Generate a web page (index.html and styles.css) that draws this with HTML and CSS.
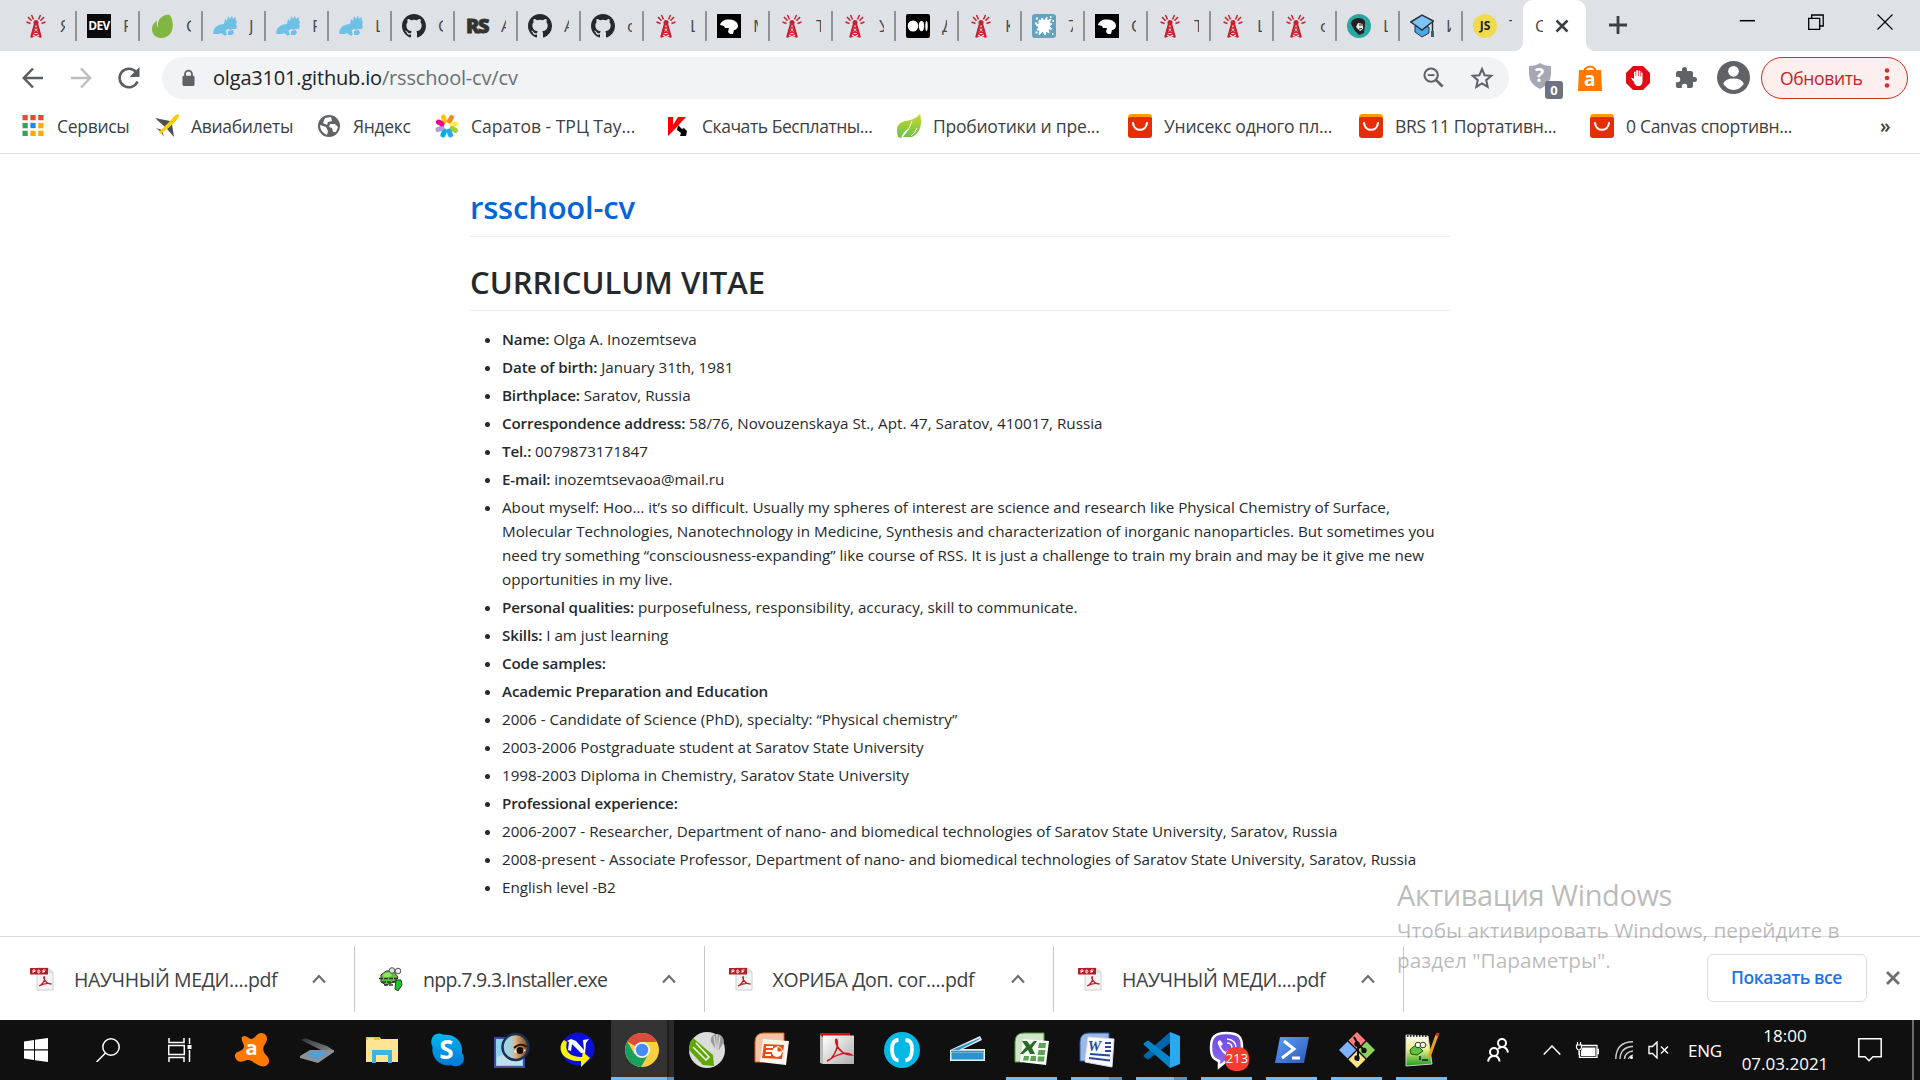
FILE: index.html
```html
<!DOCTYPE html>
<html lang="ru">
<head>
<meta charset="utf-8">
<title>CURRICULUM VITAE | rsschool-cv</title>
<link rel="stylesheet" href="styles.css">
</head>
<body>
<svg class="defs" width="0" height="0">
  <defs>
    <linearGradient id="gSkype" x1="0" y1="0" x2="0" y2="1"><stop offset="0" stop-color="#00b7f0"/><stop offset="1" stop-color="#0078d4"/></linearGradient>
    <linearGradient id="gSilver" x1="0" y1="0" x2="1" y2="1"><stop offset="0" stop-color="#fff"/><stop offset="1" stop-color="#b0b0b0"/></linearGradient>
    <linearGradient id="gPs" x1="0" y1="0" x2="1" y2="1"><stop offset="0" stop-color="#5b9bff"/><stop offset="1" stop-color="#2d5bb0"/></linearGradient>
    <linearGradient id="gLeaf" x1="0" y1="0" x2="0" y2="1"><stop offset="0" stop-color="#c8d82c"/><stop offset="1" stop-color="#6cc04a"/></linearGradient>
    <linearGradient id="gNpp" x1="0" y1="0" x2="0" y2="1"><stop offset="0" stop-color="#fff"/><stop offset=".45" stop-color="#eef58a"/><stop offset="1" stop-color="#1f9a1f"/></linearGradient>
    <linearGradient id="gViber" x1="0" y1="0" x2="0" y2="1"><stop offset="0" stop-color="#6a4be0"/><stop offset="1" stop-color="#9168f5"/></linearGradient>
    <linearGradient id="gLens" x1="0" y1="0" x2="1" y2="0"><stop offset="0" stop-color="#9cd4ec"/><stop offset=".35" stop-color="#a8cfd8"/><stop offset=".5" stop-color="#e0b080"/><stop offset="1" stop-color="#6d3d1c"/></linearGradient>
    <linearGradient id="gScan" x1="0" y1="0" x2="1" y2="1"><stop offset="0" stop-color="#303336"/><stop offset="1" stop-color="#8a8f93"/></linearGradient>
  </defs>
  <symbol id="tower" viewBox="0 0 24 24"><g fill="none" stroke="#c8202f"><path d="M11.2 9 7.2 23.500M12.800 9l4 14.500" stroke-width="2.200"/><path d="M10 13l5 3-6.500 3.500 8 3.500M14 13l-5 3 6.500 3.500-8 3.500" stroke-width="1.300"/><path d="M9.500 5.500 7.500 1M6.500 9.500 2.500 8M7.500 6.800 4 3M14.500 5.500l2-4.500M17.500 9.500l4-1.500M16.500 6.800 20 3" stroke-width="1.500"/></g><circle cx="12" cy="8.500" r="2.500" fill="#c8202f"/></symbol>
  <symbol id="envato" viewBox="0 0 24 24"><path d="M18.500.4C14 .4 8.500 4 8 9.500c-.2 2 .4 3.800.2 4.300C7 12.500 6.500 10 6.600 6.800 2.500 10 1.500 14 2.300 17.500 3.200 21.500 7 24 11.500 24c6 0 10.700-4.500 11.200-11C23 7.500 21.500 1 18.500.4z" fill="#82b541"/></symbol>
  <symbol id="rhino" viewBox="0 0 24 24"><path d="M0 21q0-8 6-10 3-1 5-1l1-5 2 2 1-5 2 3 2-3.500 1 3.500 2.500-2 .5 4h1l-1 4 1 1-1 3-4 0-1 1-3-1-3 2 2 3-2 2-4-3-2 1H0zM15 17l5-1 1 3-2 2-4 0z" fill="#6fc0e6"/><path d="M8 16l5 1-1 3z" fill="#6fc0e6"/></symbol>
  <symbol id="github" viewBox="0 0 16 16"><path fill="#24292e" d="M8 0C3.580 0 0 3.580 0 8c0 3.540 2.290 6.530 5.470 7.590.4.070.55-.17.55-.38 0-.19-.01-.82-.01-1.490-2.010.37-2.530-.49-2.690-.94-.09-.23-.48-.94-.82-1.130-.28-.15-.68-.52-.01-.53.63-.01 1.080.58 1.230.82.72 1.210 1.870.87 2.330.66.070-.52.28-.87.51-1.070-1.780-.2-3.640-.89-3.640-3.950 0-.87.31-1.590.82-2.150-.08-.2-.36-1.020.08-2.120 0 0 .67-.21 2.200.82a7.600 7.600 0 0 1 4 0c1.530-1.040 2.200-.82 2.200-.82.44 1.100.16 1.920.08 2.120.51.56.82 1.270.82 2.150 0 3.070-1.870 3.750-3.650 3.950.29.25.54.73.54 1.480 0 1.070-.01 1.930-.01 2.200 0 .21.15.46.55.38A8 8 0 0 0 16 8c0-4.420-3.580-8-8-8z"/></symbol>
  <symbol id="lion" viewBox="0 0 24 24"><path d="M0 0h24v24H0z"/><path d="M3 11c1-4 5-6 10-5.500 5 .5 8 3 8 6.500 0 2-2 4-4 4l-1 4h-3l-2-2 1-4H8l-1-2z" fill="#fff"/></symbol>
  <symbol id="medium" viewBox="0 0 24 24"><rect width="24" height="24" rx="2"/><ellipse cx="7" cy="12" rx="5.300" ry="5.500" fill="#fff"/><ellipse cx="15.500" cy="12" rx="2.700" ry="5.300" fill="#fff"/><ellipse cx="20.500" cy="12" rx="1.200" ry="5" fill="#fff"/></symbol>
  <symbol id="splat" viewBox="0 0 24 24"><rect width="24" height="24" rx="3" fill="#64a2bf"/><path d="M7 6l2 1 1-3 2 3 3-4 0 4 4-2-2 4 3 1-3 2 3 3-4 0 1 4-3-2-1 4-2-4-4 4 1-5-3 0 2-3-3-2 3-1z" fill="#fff" stroke="#fff"/><path d="M4 4.500h2M3 9.500h2M3.500 18.500h2M20 20h1.500M20.500 7H22M18 3h1.500" stroke="#fff" stroke-width="1.800"/></symbol>
  <symbol id="man" viewBox="0 0 24 24"><circle cx="12" cy="12" r="12" fill="#2ba6a0"/><path d="M4 10c0-4 4-6 8-6s7 3 6 6l-1 9-5 2-4-4z" fill="#222"/><path d="M11 9l5 1v5l-3 2-4-4z" fill="#e8e8e8"/><path d="M12 11h4M12 15l3-.5" stroke="#222"/></symbol>
  <symbol id="hat" viewBox="0 0 24 24"><path d="M5 12v6l7 5 7-4v-6z" fill="#4aa8e8" stroke="#26323c"/><path d="M.8 8 12 1l11.500 6L12 16z" fill="#7cc4f8" stroke="#26323c" stroke-width="1.500"/><path d="M22.500 8v13" stroke="#26323c" stroke-width="1.500"/><path d="M21 17h3v6h-3z" fill="#35617f"/></symbol>
  <symbol id="cross" viewBox="0 0 24 24"><path d="M6 6l12 12M18 6 6 18" stroke="currentColor" stroke-width="2.800"/></symbol>
  <symbol id="ali" viewBox="0 0 24 24"><path d="M0 3.500Q0 0 3.500 0h17Q24 0 24 3.500V10H0z" fill="#ff9a00"/><path d="M0 5q0-2 3-2h18q3 0 3 2v16q0 3-3 3H3q-3 0-3-3z" fill="#e62e04"/><path d="M5 9c1 9 13 9 14 0" stroke="#fff" stroke-width="2.200" fill="none" stroke-linecap="round"/></symbol>
  <symbol id="up" viewBox="0 0 16 16"><path d="M2 11.500 8 5l6 6.500" fill="none" stroke="currentColor" stroke-width="2.200"/></symbol>
  <symbol id="pdf" viewBox="0 0 24 24"><path d="M7 1h11l5 4v18H7z" fill="#f4f4f4" stroke="#d0d0d0"/><path d="M18 1v5h5" fill="#ddd"/><path d="M0 1h18v6.500H0z" fill="#b4202a"/><path d="M3 6V3h2v1.500H3M8 3v3q2 0 2-1.500T8 3M13 6V3h2.500M13 4.500h2" fill="none" stroke="#fff" stroke-width=".9"/><path d="M9 19c3-1 6-5 5.500-8.500-.3-1.500-1-.5-.5 1 1.300 4 4 5.500 7.500 5.500-4-1.500-8.500-.3-12.500 2z" fill="none" stroke="#c2202b" stroke-width="1.300"/></symbol>
</svg>

<header class="tabs">
  <div class="tab"><svg><use href="#tower"/></svg><span>Я</span></div>
  <div class="tab"><i class="fav dev">DEV</i><span>F</span></div>
  <div class="tab"><svg><use href="#envato"/></svg><span>C</span></div>
  <div class="tab"><svg><use href="#rhino"/></svg><span>J</span></div>
  <div class="tab"><svg><use href="#rhino"/></svg><span>F</span></div>
  <div class="tab"><svg><use href="#rhino"/></svg><span>L</span></div>
  <div class="tab"><svg><use href="#github"/></svg><span>C</span></div>
  <div class="tab"><i class="fav rs">RS</i><span>A</span></div>
  <div class="tab"><svg><use href="#github"/></svg><span>A</span></div>
  <div class="tab"><svg><use href="#github"/></svg><span>c</span></div>
  <div class="tab"><svg><use href="#tower"/></svg><span>L</span></div>
  <div class="tab"><svg><use href="#lion"/></svg><span>M</span></div>
  <div class="tab"><svg><use href="#tower"/></svg><span>T</span></div>
  <div class="tab"><svg><use href="#tower"/></svg><span>У</span></div>
  <div class="tab"><svg><use href="#medium"/></svg><span>Д</span></div>
  <div class="tab"><svg><use href="#tower"/></svg><span>К</span></div>
  <div class="tab"><svg><use href="#splat"/></svg><span>7</span></div>
  <div class="tab"><svg><use href="#lion"/></svg><span>C</span></div>
  <div class="tab"><svg><use href="#tower"/></svg><span>T</span></div>
  <div class="tab"><svg><use href="#tower"/></svg><span>L</span></div>
  <div class="tab"><svg><use href="#tower"/></svg><span>c</span></div>
  <div class="tab"><svg><use href="#man"/></svg><span>L</span></div>
  <div class="tab"><svg><use href="#hat"/></svg><span>И</span></div>
  <div class="tab last"><i class="fav js">JS</i><span>T</span></div>
  <div class="tab active"><span>C</span><svg><use href="#cross"/></svg></div>
  <svg class="plus" viewBox="0 0 18 18"><path d="M9 0v18M0 9h18" stroke="#3c4043" stroke-width="2.800"/></svg>
  <div class="winbtns">
    <svg viewBox="0 0 16 16"><path d="M.8 6.700h15.200" stroke="#000" stroke-width="1.500"/></svg>
    <svg viewBox="0 0 16 16"><path d="M.7 4.300h11v11H.7zM3.700 4V1h11.500v11H12" fill="none" stroke="#000" stroke-width="1.300"/></svg>
    <svg viewBox="0 0 16 16"><path d="M.5.5l15 15M15.500.5l-15 15" stroke="#000" stroke-width="1.200"/></svg>
  </div>
</header>

<nav class="toolbar">
  <div class="navbtns">
    <svg viewBox="0 0 24 24"><path d="M22 12H3M12 2.500 2.800 12l9.200 9.500" fill="none" stroke="#5a5d61" stroke-width="2.500"/></svg>
    <svg viewBox="0 0 24 24"><path d="M2 12h19M12 2.500l9.200 9.500-9.200 9.500" fill="none" stroke="#bcbec0" stroke-width="2.500"/></svg>
    <svg viewBox="0 0 24 24"><path d="M20.500 15.500A9.300 9.300 0 1 1 19 6" fill="none" stroke="#5a5d61" stroke-width="2.500"/><path d="M22.500 1v10h-10z" fill="#5a5d61"/></svg>
  </div>
  <div class="omnibox">
    <svg class="lock" viewBox="0 0 14 18"><path d="M3.300 8V4.800a3.700 3.700 0 0 1 7.400 0V8" fill="none" stroke="#5f6368" stroke-width="2"/><rect x=".5" y="6.500" width="13" height="11" rx="1.500" fill="#5f6368"/></svg>
    <span class="url"><b>olga3101.github.io</b>/rsschool-cv/cv</span>
    <svg class="mag" viewBox="0 0 22 22"><circle cx="8.500" cy="8.500" r="7" fill="none" stroke="#5f6368" stroke-width="2.200"/><path d="M13.500 13.500l7 7" stroke="#5f6368" stroke-width="2.800"/><path d="M5 8.500h7" stroke="#5f6368" stroke-width="2"/></svg>
    <svg class="star" viewBox="0 0 24 24"><path d="M12 3l2.600 6.200 6.700.6-5.100 4.400 1.500 6.600-5.700-3.500-5.700 3.500 1.500-6.600-5.100-4.400 6.700-.6z" fill="none" stroke="#5f6368" stroke-width="2"/></svg>
  </div>
  <div class="exts">
    <div class="shield"><svg viewBox="0 0 24 26"><path d="M0 3Q7 3 11 0q4 3 11 3v8q0 10-11 15Q0 21 0 11z" fill="#a4a8b5"/></svg><em>?</em><b>0</b></div>
    <div class="bag"><svg viewBox="0 0 24 26"><path d="M7 7V4q5-5 10 0v3" fill="none" stroke="#ff7800" stroke-width="2"/><path d="M1 5h22l1 21H0z" fill="#ff7800"/></svg><em>a</em></div>
    <svg class="abp" viewBox="0 0 24 24"><path d="M7 0h10l7 7v10l-7 7H7l-7-7V7z" fill="#e30b13"/><path d="M7 15l-2-3q1-1 3 1V6q1-1 1.600 0v4l.6 0V4.500q1-1 1.800 0V10h.6V5q1-1 1.800 0v5.500h.6V7q1-1 1.500 0v8q0 4-3 5h-3q-2-1-3-5z" fill="#fff"/></svg>
    <svg class="puz" viewBox="0 0 24 24"><path d="M20.500 11H19V7c0-1.100-.9-2-2-2h-4V3.500a2.500 2.500 0 0 0-5 0V5H4a2 2 0 0 0-2 2v3.800h1.500a2.700 2.700 0 0 1 0 5.400H2V20c0 1.100.9 2 2 2h3.800v-1.500a2.700 2.700 0 0 1 5.400 0V22H17a2 2 0 0 0 2-2v-4h1.500a2.500 2.500 0 0 0 0-5z" fill="#5f6368"/></svg>
    <svg class="avatar" viewBox="0 0 32 32"><circle cx="16" cy="16" r="16" fill="#5f6368"/><circle cx="16" cy="10" r="5.200" fill="#fff"/><path d="M6 22q2-5 10-5t10 5q-4 6-10 6T6 22z" fill="#fff"/></svg>
  </div>
  <div class="update"><span>Обновить</span><svg viewBox="0 0 6 20"><circle cx="3" cy="2.500" r="2.300"/><circle cx="3" cy="10" r="2.300"/><circle cx="3" cy="17.500" r="2.300"/></svg></div>
</nav>

<nav class="bookmarks">
  <div class="bm b1"><svg viewBox="0 0 20 20"><path d="M0 0h5v5H0zM7.500 0h5v5h-5zM15 0h5v5h-5z" fill="#f04438"/><path d="M0 7.500h5v5H0zM0 15h5v5H0z" fill="#34a05a"/><path d="M7.500 7.500h5v5h-5z" fill="#1e88f0"/><path d="M15 7.500h5v5h-5zM7.500 15h5v5h-5zM15 15h5v5h-5z" fill="#f9ab00"/></svg><span>Сервисы</span></div>
  <div class="bm b2"><svg viewBox="0 0 24 24"><path d="M0 4l15 3 1 2-5 4-1 0zM19 23l-2-13-5 5z" fill="#4b5055"/><path d="M1 14l6 2 2 7-3-5z" fill="#4b5055"/><path d="M24 0c-3 0-5 2-8 6L4 18l2 2 13-11c4-4 5-6 5-9z" fill="#fc0"/></svg><span>Авиабилеты</span></div>
  <div class="bm b3"><svg viewBox="0 0 24 24"><circle cx="12" cy="12" r="11" fill="#5f6368"/><path d="M3 11l6 2 2 4-1 4Q3 18 3 11zM8 4l6-1 1 4-4 1-1 3-4-2zM13 10l5 0 3 3-2 5-3 0-1-4-3-1z" fill="#fff"/></svg><span>Яндекс</span></div>
  <div class="bm b4"><svg viewBox="0 0 24 24"><g stroke-width="5" stroke-linecap="round"><path d="M9.500 7 8.500 3" stroke="#ffc400"/><path d="M14.500 7l2-3.500" stroke="#f68b1f"/><path d="M17 11l4-1" stroke="#ffe95c"/><path d="M17 14.500l3.500 2" stroke="#a6ce39"/><path d="M14 17l1.500 4" stroke="#29abe2"/><path d="M9.500 17 8 21" stroke="#00aeef"/><path d="M7 14l-4 1.500" stroke="#b19cd9"/><path d="M7 10 3.500 8" stroke="#ec008c"/></g></svg><span>Саратов - ТРЦ Тау...</span></div>
  <div class="bm b5"><svg viewBox="0 0 24 24"><path d="M2 3h5v8l5-8h8L9 15l-7 7z" fill="#f00"/><path d="M12 11l4 4 2-1 3 3-1 5-6 0 1-3-4-3z"/></svg><span>Скачать Бесплатны...</span></div>
  <div class="bm b6"><svg viewBox="0 0 24 24"><path d="M1 23C-2 12 2 9 8 7q10-1 15-7c3 12-1 20-8 23H6l5-8q-4 2-7 9z" fill="url(#gLeaf)"/><path d="M6 22q7-7 9-15M14 22q4-3 6-8" stroke="#fff" stroke-width="1" fill="none"/></svg><span>Пробиотики и пре...</span></div>
  <div class="bm b7"><svg><use href="#ali"/></svg><span>Унисекс одного пл...</span></div>
  <div class="bm b8"><svg><use href="#ali"/></svg><span>BRS 11 Портативн...</span></div>
  <div class="bm b9"><svg><use href="#ali"/></svg><span>0 Canvas спортивн...</span></div>
  <span class="more">»</span>
</nav>

<main class="page">
  <article class="markdown">
    <h1><a>rsschool-cv</a></h1>
    <h1 class="cv">CURRICULUM VITAE</h1>
    <ul>
      <li><strong>Name:</strong> Olga A. Inozemtseva</li>
      <li><strong>Date of birth:</strong> January 31th, 1981</li>
      <li><strong>Birthplace:</strong> Saratov, Russia</li>
      <li><strong>Correspondence address:</strong> 58/76, Novouzenskaya St., Apt. 47, Saratov, 410017, Russia</li>
      <li><strong>Tel.:</strong> 0079873171847</li>
      <li><strong>E-mail:</strong> inozemtsevaoa@mail.ru</li>
      <li>About myself: Hoo… it’s so difficult. Usually my spheres of interest are science and research like Physical Chemistry of Surface,<br>Molecular Technologies, Nanotechnology in Medicine, Synthesis and characterization of inorganic nanoparticles. But sometimes you<br>need try something “consciousness-expanding” like course of RSS. It is just a challenge to train my brain and may be it give me new<br>opportunities in my live.</li>
      <li><strong>Personal qualities:</strong> purposefulness, responsibility, accuracy, skill to communicate.</li>
      <li><strong>Skills:</strong> I am just learning</li>
      <li><strong>Code samples:</strong></li>
      <li><strong>Academic Preparation and Education</strong></li>
      <li>2006 - Candidate of Science (PhD), specialty: “Physical chemistry”</li>
      <li>2003-2006 Postgraduate student at Saratov State University</li>
      <li>1998-2003 Diploma in Chemistry, Saratov State University</li>
      <li><strong>Professional experience:</strong></li>
      <li>2006-2007 - Researcher, Department of nano- and biomedical technologies of Saratov State University, Saratov, Russia</li>
      <li>2008-present - Associate Professor, Department of nano- and biomedical technologies of Saratov State University, Saratov, Russia</li>
      <li>English level -B2</li>
    </ul>
  </article>
</main>

<section class="downloads">
  <div class="dl"><svg class="ico"><use href="#pdf"/></svg><span>НАУЧНЫЙ МЕДИ....pdf</span><svg class="chev"><use href="#up"/></svg></div>
  <div class="dl exe"><svg class="ico" viewBox="0 0 24 24"><path d="M2 8l5-4 7 0 5 6-4 5-8 3-5-3z" fill="#5fc23f" stroke="#333"/><path d="M4 7l7-2 2 4-8 2z" fill="#8de85a"/><path d="M0 11.500h19M3 15h14M5 18h9" stroke="#333" stroke-width="1.500" stroke-dasharray="4 1"/><circle cx="13" cy="3.500" r="2.800" fill="#ddd" stroke="#555"/><circle cx="19" cy="4" r="2.800" fill="#eee" stroke="#555"/><path d="M17 13l5 0 1 5-4 6-3-2z" fill="#21c42d" stroke="#333"/></svg><span>npp.7.9.3.Installer.exe</span><svg class="chev"><use href="#up"/></svg></div>
  <div class="dl"><svg class="ico"><use href="#pdf"/></svg><span>ХОРИБА Доп. сог....pdf</span><svg class="chev"><use href="#up"/></svg></div>
  <div class="dl"><svg class="ico"><use href="#pdf"/></svg><span>НАУЧНЫЙ МЕДИ....pdf</span><svg class="chev"><use href="#up"/></svg></div>
  <div class="showall">Показать все</div>
  <svg class="close"><use href="#cross"/></svg>
  <div class="watermark"><p class="big">Активация Windows</p><p>Чтобы активировать Windows, перейдите в</p><p>раздел "Параметры".</p></div>
</section>

<footer class="taskbar">
  <div class="sys s1"><svg viewBox="0 0 24 24"><path d="M0 3.400 10 2v9.300H0zM11 1.800 24 0v11.300H11zM0 12.500h10V22L0 20.600zM11 12.500h13V24l-13-1.800z" fill="#fff"/></svg></div>
  <div class="sys s2"><svg viewBox="0 0 24 24"><circle cx="15" cy="9" r="8.200" fill="none" stroke="#fff" stroke-width="1.500"/><path d="M9.500 15 .5 24" stroke="#fff" stroke-width="1.500"/></svg></div>
  <div class="sys s3"><svg viewBox="0 0 24 24"><path d="M1 0v4.500h15V0M1 24v-4.500h15V24M.7 7.500h15.600v9H.7zM21.500 0v6M21.500 12v12" fill="none" stroke="#fff" stroke-width="1.500"/><path d="M19.500 7h4v4h-4z" fill="#fff"/></svg></div>
  <div class="app"><svg viewBox="0 0 36 36"><path d="M8 5c3-3 6 1 9 2 4 0 6-7 11-6 6 1 6 7 3 11-3 5-2 8 2 12 5 6 0 12-6 10-6-1-9-7-14-6-5 2-8 3-11-1s0-7 4-8c4-2 5-4 3-8q-2-4-1-6z" fill="#ff7800"/></svg><em class="av">a</em></div>
  <div class="app"><svg viewBox="0 0 36 36"><path d="M2 8q1-2 5-1.500L28 14l6 4-6 3z" fill="url(#gScan)"/><path d="M1 24l10-6 24 0v2L19 31 1 26z" fill="#8a9095"/><path d="M7 24l7-4.500 15 .5-9 6.500z" fill="#4fa2dc"/></svg></div>
  <div class="app"><svg viewBox="0 0 36 36"><path d="M2 6q0-1 1-1h12q1 0 2 2h17v23H2z" fill="#ffe491"/><path d="M2 6q0-1 1-1h12l1 3H2z" fill="#f5c32f"/><path d="M4 7h6" stroke="#fff"/><path d="M8 31V18h20v13h-4v-8H12v8z" fill="#3ab5e6"/></svg></div>
  <div class="app"><svg viewBox="0 0 36 36"><path d="M10 1.500c2 0 3 1 5 1.300a16 16 0 0 1 18 18c2 3 3 8 0 11s-7 3-11 1.500A16 16 0 0 1 3.500 15C1 10 2 2 10 1.500z" fill="url(#gSkype)"/></svg><em class="sk">S</em></div>
  <div class="app"><svg viewBox="0 0 36 36"><path d="M1 6h29v29H1z" fill="#8fd0ec" stroke="#4048a8" stroke-width="2"/><path d="M3 25q8-5 12 0l13 0v8H3z" fill="#bfe0ea"/><circle cx="21.500" cy="15" r="13" fill="url(#gLens)" stroke="#1b2f52" stroke-width="2.500"/><path d="M20 20q4-6 12-2-4 5-12 2z" fill="#fff"/><circle cx="26" cy="18.500" r="3.500" fill="#1c0d06"/><path d="M20 16q6-6 13-1" stroke="#2c1508" stroke-width="2" fill="none"/></svg></div>
  <div class="app"><svg viewBox="0 0 36 36"><circle cx="19" cy="17" r="16.500" fill="#0a10d8"/><path d="M8 9l4-2 5 2 8 9-1-10 6-1-3 4-1 11-4-1-9-9-1 7-3-1 1-8z" fill="#fff"/><path d="M5 8C-3 16 3 30 22 29v6l9-9-7-6-1 5C12 25 5 20 8 10z" fill="#fff200"/></svg></div>
  <div class="app chrome"><svg viewBox="0 0 36 36"><circle cx="18" cy="18" r="17" fill="#ffcd40"/><path d="M18 18 3.300 9.500A17 17 0 0 1 33 10H18z" fill="#db4c3f"/><path d="M3.300 9.500A17 17 0 0 0 17 35l7.500-13H10.500z" fill="#17a05e"/><circle cx="18" cy="18" r="8" fill="#f1f1f1"/><circle cx="18" cy="18" r="6.200" fill="#4a8af4"/></svg></div>
  <div class="app"><svg viewBox="0 0 36 36"><circle cx="18" cy="18" r="18" fill="#dcdcdc"/><path d="M1 10 4 6l20 17 1 11-11-1L0 18z" fill="#5fa800"/><path d="M4 15l13 13 3-3L7 11" fill="none" stroke="#fff" stroke-width="1.500"/><path d="M28 2c-5 0-7 4-6 8l5 8h3l5-8c0-4-3-8-7-8z" fill="#999"/><path d="M28 2v16M25 4l2 14M31 4l-2 14" stroke="#e4e4e4"/></svg></div>
  <div class="app"><svg viewBox="0 0 36 36"><path d="M1 30V10Q1 1 10 1h20v10L10 12 8 30z" fill="#f6c3a6" stroke="#e35a1c"/><path d="M9 7l26 2-3 24L6 30z" fill="#fff5ef"/><path d="M10 12l20 1-2 14-20-1z" fill="#ea4c12"/><path d="M12 15h7M12 19h6M11 23h6" stroke="#fff" stroke-width="2"/><circle cx="23" cy="20" r="5" fill="#fff"/><path d="M23 20v-5.500a5.500 5.500 0 0 1 5.500 5.500z" fill="#ea4c12" stroke="#fff"/></svg></div>
  <div class="app"><svg viewBox="0 0 36 36"><path d="M1 1h30v3H1z" fill="#e30613"/><path d="M1 3l3 2v27l-3-1z" fill="#bbb"/><path d="M4 3.500h31V32H4z" fill="url(#gSilver)"/><path d="M8 29c6-2 12-13 10-21-1-2-2 0-1 3 2 7 8 12 16 12-6-4-17 0-23 5z" fill="none" stroke="#d3151d" stroke-width="1.500"/></svg></div>
  <div class="app"><svg viewBox="0 0 36 36"><circle cx="18" cy="18" r="18" fill="#00b9e4"/><path d="M14.500 8Q7.500 8 8 18t6.500 10.500M21.500 8Q28.500 8 28 18t-6.500 10.500" fill="none" stroke="#fff" stroke-width="3.800"/></svg></div>
  <div class="app"><svg viewBox="0 0 36 36"><path d="M1 18 31 4l2 4-19 9h22v12H1z" fill="#e8eef2"/><path d="M3 18 31 6v1L10 18zM2.500 20.500h32v7h-32z" fill="#2795cf"/><path d="M2 19.500h33" stroke="#2795cf" stroke-width="1.500"/></svg></div>
  <div class="app run"><svg viewBox="0 0 36 36"><path d="M1 30V10Q1 1 10 1h20v10L10 12 8 30z" fill="#cfe5c8" stroke="#4c9a34"/><path d="M9 7l26 2-3 24L6 30z" fill="#f7fbf5"/><path d="M25 11h7l-.6 5H24zM24.500 18h6.800l-.6 5h-7zM10 24h5l-.5 4.500H9zM17 24h5v5h-6zM24 24.500h6.500l-.5 5h-6.500z" fill="#5aa552"/><path d="M8 9h5l3 4 4-4h3l-5 7 3 6h-5l-2-4-5 4H6l6-7z" fill="#286b25"/></svg></div>
  <div class="app run two"><svg viewBox="0 0 36 36"><path d="M1 29V10Q1 1 10 1h20v10L10 12 8 29z" fill="#9db9e3" stroke="#2f5ba8"/><path d="M9 5l26 2-2 28L6 30z" fill="#fafcff" stroke="#d5dced"/><path d="M26 11h6M26 15h6M26 19h6M11 22l20 1.500M10 26l21 2.500" stroke="#27489c" stroke-width="2"/></svg><em class="wd">W</em></div>
  <div class="app run two"><svg viewBox="0 0 36 36"><path d="M26 0v11L5 27q-1 1-2 0l-3-2q-1-1 0-2z" fill="#0065a9"/><path d="M26 36V25L5 9Q4 8 3 9l-3 2q-1 1 0 2z" fill="#0a82c8"/><path d="M26 0l10 4v28l-10 4z" fill="#2aa8f0"/></svg></div>
  <div class="app run viber"><svg viewBox="0 0 36 36"><path d="M17 1C5 1 2 6 2 15s2 12 8 14v6l6-5c12 0 17-4 17-15S29 1 17 1z" fill="url(#gViber)" stroke="#fff" stroke-width="2.500"/><path d="M11 8q-3 1-2 4 3 9 11 13 3 0 4-3l-5-4-2 2q-4-2-5-6l2-2z" fill="#fff"/><path d="M18 7q9 1 9 9M18 11q5 0 5 5" fill="none" stroke="#fff" stroke-width="1.500"/></svg><b class="badge">213</b></div>
  <div class="app run"><svg viewBox="0 0 36 36"><path d="M6 5h29l-5 26H1z" fill="url(#gPs)"/><path d="M10 9l10 8L8 26M18 26h8" fill="none" stroke="#fff" stroke-width="3"/></svg></div>
  <div class="app run"><svg viewBox="0 0 36 36"><path d="M18 0l8.500 8.500L18 17 9.500 8.500z" fill="#ff7d7d"/><path d="M27.500 9.500 36 18l-8.500 8.500L19 18z" fill="#8ed160"/><path d="M8.500 9.500 17 18l-8.500 8.500L0 18z" fill="#7fb2ff"/><path d="M18 19l8.500 8.500L18 36l-8.500-8.500z" fill="#ffe685"/><path d="M15 5l4 7v17M18 11l8 8" stroke="#101010" stroke-width="2" fill="none"/><circle cx="18" cy="12" r="2.700" fill="#101010"/><circle cx="25" cy="18.500" r="2.700" fill="#101010"/><circle cx="18" cy="26" r="2.700" fill="#101010"/></svg></div>
  <div class="app run"><svg viewBox="0 0 36 36"><path d="M2 3l22 1 4 28-26 2z" fill="url(#gNpp)" stroke="#ccc"/><path d="M3 4h20" stroke="#333" stroke-width="2" stroke-dasharray="1.500 1.500"/><path d="M6 18q4-6 9-3l4 4-6 4-6-1z" fill="#5cc43c" stroke="#264f1a"/><circle cx="14" cy="13" r="2.800" fill="#fff" stroke="#333"/><circle cx="19" cy="13" r="2.800" fill="#fff" stroke="#333"/><path d="M16 28v-4M18 28h6" stroke="#123" stroke-width="1.500"/><path d="M33 3 25 25" stroke="#f0a020" stroke-width="3"/><path d="M34 1l-1 3" stroke="#c33" stroke-width="3"/></svg></div>
  <div class="tray">
    <svg class="people" viewBox="0 0 22 24"><g fill="none" stroke="#fff" stroke-width="2"><circle cx="15" cy="5" r="4"/><circle cx="7" cy="14" r="4"/><path d="M1 23.500q1-5.500 6-5.500t5.500 5.500M11 11q2-2 4-2 5 0 6 5.500"/></g></svg>
    <svg class="tup" viewBox="0 0 18 10"><path d="M.7 9.500 9 1l8.300 8.500" fill="none" stroke="#fff" stroke-width="1.500"/></svg>
    <svg class="bat" viewBox="0 0 24 16"><path d="M6 3.500h16v12H4.500V9M22.500 7.500h1v4h-1" fill="none" stroke="#fff" stroke-width="1.300"/><path d="M7.500 5.500h13v8.500H6V9z" fill="#fff"/><path d="M1.500 3h5v3q-2.500 4-5 0zM2.500 3V0M5.500 3V0M4 8v5" fill="none" stroke="#fff" stroke-width="1.200"/></svg>
    <svg class="wifi" viewBox="0 0 18 18"><g fill="none" stroke="#ccc" stroke-width="1.400"><path d="M.8 18Q1 1 18 .8M5 18Q5.500 6 18 5.500M9.500 18q.5-7 8.500-8"/></g><path d="M13.500 18q0-3 4.500-4" fill="none" stroke="#fff" stroke-width="1"/><circle cx="16.500" cy="16.500" r="1.500" fill="#fff"/></svg>
    <svg class="vol" viewBox="0 0 21 18"><path d="M1 5.500h3.500L9 1v16l-4.500-4.500H1zM13 5.500l7 7M20 5.500l-7 7" fill="none" stroke="#fff" stroke-width="1.400"/></svg>
    <span class="lang">ENG</span>
    <div class="clock"><span>18:00</span><span>07.03.2021</span></div>
    <svg class="note" viewBox="0 0 24 24"><path d="M.8.8h22.400v18H15l-4 4-4-4H.8z" fill="none" stroke="#fff" stroke-width="1.500"/></svg>
    <i class="peek"></i>
  </div>
</footer>
</body>
</html>
```
FILE: styles.css
```css
* { box-sizing: border-box; }
html, body { margin: 0; }
body {
  width: 1920px; height: 1080px; overflow: hidden;
  display: flex; flex-direction: column;
  font-family: "Open Sans", "Noto Sans", sans-serif;
  background: #fff; color: #24292e; white-space: nowrap;
}
svg { display: block; flex: none; }
em, i { font-style: normal; }
.defs { position: absolute; }

/* tab strip */
.tabs { height: 51px; flex: none; background: #dee1e6; display: flex; padding-left: 13px; align-items: flex-start; }
.tab { width: 63px; flex: none; height: 51px; display: flex; align-items: center; padding-left: 11px; gap: 12px; position: relative; }
.tab::after { content: ""; width: 2px; height: 30px; background: #8f9296; position: absolute; right: -1px; top: 11px; }
.tab.last::after, .tab.active::after { content: none; }
.tab svg { width: 24px; height: 24px; }
.tab span { width: 5px; overflow: hidden; font-size: 17px; line-height: 24px; color: #45494d; }
.tab.last { width: 61px; }
.tab.last span { width: 3px; }
.fav { width: 24px; height: 24px; display: flex; align-items: center; justify-content: center; line-height: 1; flex: none; }
.dev { background: #0a0a0a; color: #fff; font: 700 12px "Open Sans", sans-serif; letter-spacing: -.6px; }
.rs { font: 800 20px "Open Sans", sans-serif; color: #333; letter-spacing: -1.500px; -webkit-text-stroke: .8px #333; }
.js { background: #f0db4f; border-radius: 50%; font: 700 12px "Open Sans", sans-serif; color: #222; }
.tab.active { background: #fff; border-radius: 10px 10px 0 0; padding-left: 12px; gap: 8px; color: #3c4043; }
.tab.active span { width: 8px; }
.tab.active svg { width: 22px; height: 22px; }
.tab.active::before { content: ""; position: absolute; left: -10px; right: -10px; bottom: 0; height: 10px;
  background: radial-gradient(circle at 0 0, transparent 10px, #fff 10.500px) left / 10px 10px no-repeat, radial-gradient(circle at 100% 0, transparent 10px, #fff 10.500px) right / 10px 10px no-repeat; }
.plus { width: 18px; height: 18px; margin: 16px 0 0 23px; }
.winbtns { display: flex; gap: 53px; margin: 14px 27px 0 auto; }
.winbtns svg { width: 16px; height: 16px; }

/* toolbar */
.toolbar { height: 53px; flex: none; display: flex; align-items: center; padding-left: 21px; }
.navbtns { display: flex; gap: 24px; width: 141px; }
.navbtns svg { width: 24px; height: 24px; }
.omnibox { width: 1347px; height: 42px; border-radius: 21px; background: #f1f3f4; display: flex; align-items: center; padding: 0 15px 0 20px; }
.lock { width: 13px; height: 18px; }
.url { margin-left: 18px; font-size: 20px; color: #6b6f73; flex: 1; letter-spacing: -.18px; }
.url b { font-weight: 400; color: #202124; }
.mag { width: 21px; height: 21px; margin-right: 26px; }
.star { width: 24px; height: 24px; }
.exts { display: flex; align-items: center; height: 53px; }
.shield { margin-left: 20px; position: relative; width: 34px; height: 40px; }
.shield svg { width: 24px; height: 26px; margin-top: 5px; }
.shield em { position: absolute; left: 6px; top: 4px; font: 700 19px "Open Sans", sans-serif; color: #fff; }
.shield b { position: absolute; right: 0; bottom: -1px; width: 18px; height: 18px; border-radius: 3px; background: #6f7180; color: #fff; font: 700 13px/18px "Open Sans", sans-serif; text-align: center; }
.bag { margin-left: 15px; position: relative; width: 24px; height: 26px; }
.bag svg { width: 24px; height: 26px; }
.bag em { position: absolute; left: 6px; top: 1px; font: 700 19px/26px "Open Sans", sans-serif; color: #fff; }
.abp { width: 24px; height: 24px; margin-left: 24px; }
.puz { width: 24px; height: 24px; margin-left: 24px; }
.avatar { width: 33px; height: 33px; margin-left: 19px; }
.update { margin-left: 11px; width: 147px; height: 42px; border: 1.500px solid #d03028; border-radius: 21px; background: #fcefee; color: #c5221f; display: flex; align-items: center; justify-content: space-between; padding: 0 17px 0 18px; font-size: 17.500px; letter-spacing: -.35px; }
.update svg { width: 6px; height: 20px; fill: #d93025; }

/* bookmarks */
.bookmarks { height: 50px; flex: none; border-bottom: 1px solid #dadce0; display: flex; align-items: center; padding: 0 0 6px 21px; font-size: 17.500px; color: #3c4043; }
.bm { display: flex; align-items: center; gap: 12px; flex: none; letter-spacing: -.3px; }
.bm svg { width: 24px; height: 24px; }
.b1 svg { width: 24px; height: 21px; }
.b1 { width: 134px; } .b2 { width: 162px; } .b3 { width: 118px; } .b4, .b5, .b6, .b7, .b8 { width: 231px; } .b9 { width: 290px; }
.b4 { letter-spacing: 0; }
.b5 { letter-spacing: -.45px; }
.b6, .b7 { letter-spacing: -.23px; }
.more { font-size: 19px; font-weight: 600; }

/* page */
.page { flex: 1; min-height: 0; padding: 32px 0 0 470px; }
.markdown { width: 980px; font-size: 15.200px; line-height: 24px; }
h1 { margin: 0 0 24px; height: 50.600px; border-bottom: 1px solid #eaecef; font-size: 31px; line-height: 43px; font-weight: 550; }
h1 a { color: #0366d6; letter-spacing: -.2px; }
h1.cv { margin-bottom: 16px; }
ul { margin: 0; padding-left: 32px; }
li + li { margin-top: 4px; }
strong { font-weight: 600; letter-spacing: -.15px; }

/* downloads shelf */
.downloads { height: 84px; flex: none; border-top: 1px solid #d8dadd; display: flex; align-items: center; position: relative; color: #3c4043; }
.dl { width: 349.500px; height: 66px; border-right: 1.500px solid #c8c8c8; display: flex; align-items: center; padding: 0 27px 0 24px; font-size: 19.500px; letter-spacing: -.38px; }
.dl:first-child { width: 355px; padding-left: 30px; }
.dl .ico { width: 24px; height: 24px; margin-right: 20px; }
.dl span { padding-top: 2px; }
.exe { letter-spacing: -.7px; }
.chev { width: 16px; height: 16px; margin-left: auto; color: #6b6e72; }
.showall { margin: -2px 0 0 303px; width: 160px; height: 48px; border: 1.500px solid #dadce0; border-radius: 6px; color: #1a73e8; font-size: 17.500px; font-weight: 600; letter-spacing: -.45px; line-height: 45px; text-align: center; }
.close { width: 24px; height: 24px; margin: -2px 0 0 14px; color: #6b6e72; }
.watermark { position: absolute; left: 1397px; top: -62px; color: rgba(120, 120, 120, .5); }
.watermark p { margin: 0; font-size: 20.800px; line-height: 30px; }
.watermark .big { font-size: 29px; line-height: 40px; letter-spacing: -.4px; }

/* taskbar */
.taskbar { height: 60px; flex: none; background: #101010; color: #fff; display: flex; }
.sys { width: 72px; display: flex; align-items: center; justify-content: center; }
.sys svg { width: 24px; height: 24px; }
.s3 { margin-right: 3px; }
.app { width: 65px; display: flex; align-items: center; justify-content: center; position: relative; }
.app svg { width: 36px; height: 36px; overflow: visible; }
.app em { position: absolute; inset: 0; text-align: center; line-height: 56px; font-weight: 700; color: #fff; }
.app .av { font-size: 20px; }
.app .sk { font-size: 26px; line-height: 59px; }
.app .wd { font: 700 italic 15px/52px "Liberation Serif", serif; color: #27489c; right: 4px; }
.run::after { content: ""; position: absolute; left: 7px; right: 7px; bottom: 0; height: 3px; background: #76b9ed; }
.run.two::after { background: linear-gradient(90deg, #76b9ed 75%, #5a8fba 75%); }
.chrome { background: linear-gradient(90deg, #333 56px, #1f1f1f 56px, #1f1f1f 58px, #2a2a2a 58px) 2px 0 / 63px 100% no-repeat; }
.chrome::after { content: ""; position: absolute; left: 2px; right: 0; bottom: 0; height: 3px; background: linear-gradient(90deg, #76b9ed 56px, #4f81a8 56px, #5a8fba 58px); }
.badge { position: absolute; left: 31px; top: 27px; width: 24px; height: 24px; border-radius: 10px; background: #ff3b30; font: 400 13px/23px "Open Sans", sans-serif; text-align: center; }
.tray { margin-left: auto; display: flex; align-items: center; font-size: 17px; }
.people { width: 22px; height: 24px; margin-right: 34px; }
.tup { width: 18px; height: 10px; margin-right: 14px; }
.bat { width: 24px; height: 16px; margin-right: 16px; }
.wifi { width: 18px; height: 18px; margin-right: 15px; }
.vol { width: 21px; height: 18px; margin-right: 19px; }
.lang { width: 33px; letter-spacing: -.3px; }
.clock { display: flex; flex-direction: column; align-items: center; line-height: 28px; width: 88px; margin: 0 29px 0 20px; }
.note { width: 24px; height: 24px; margin-right: 30px; }
.peek { width: 2px; height: 60px; background: #6b6b6b; margin-right: 6px; }
```
